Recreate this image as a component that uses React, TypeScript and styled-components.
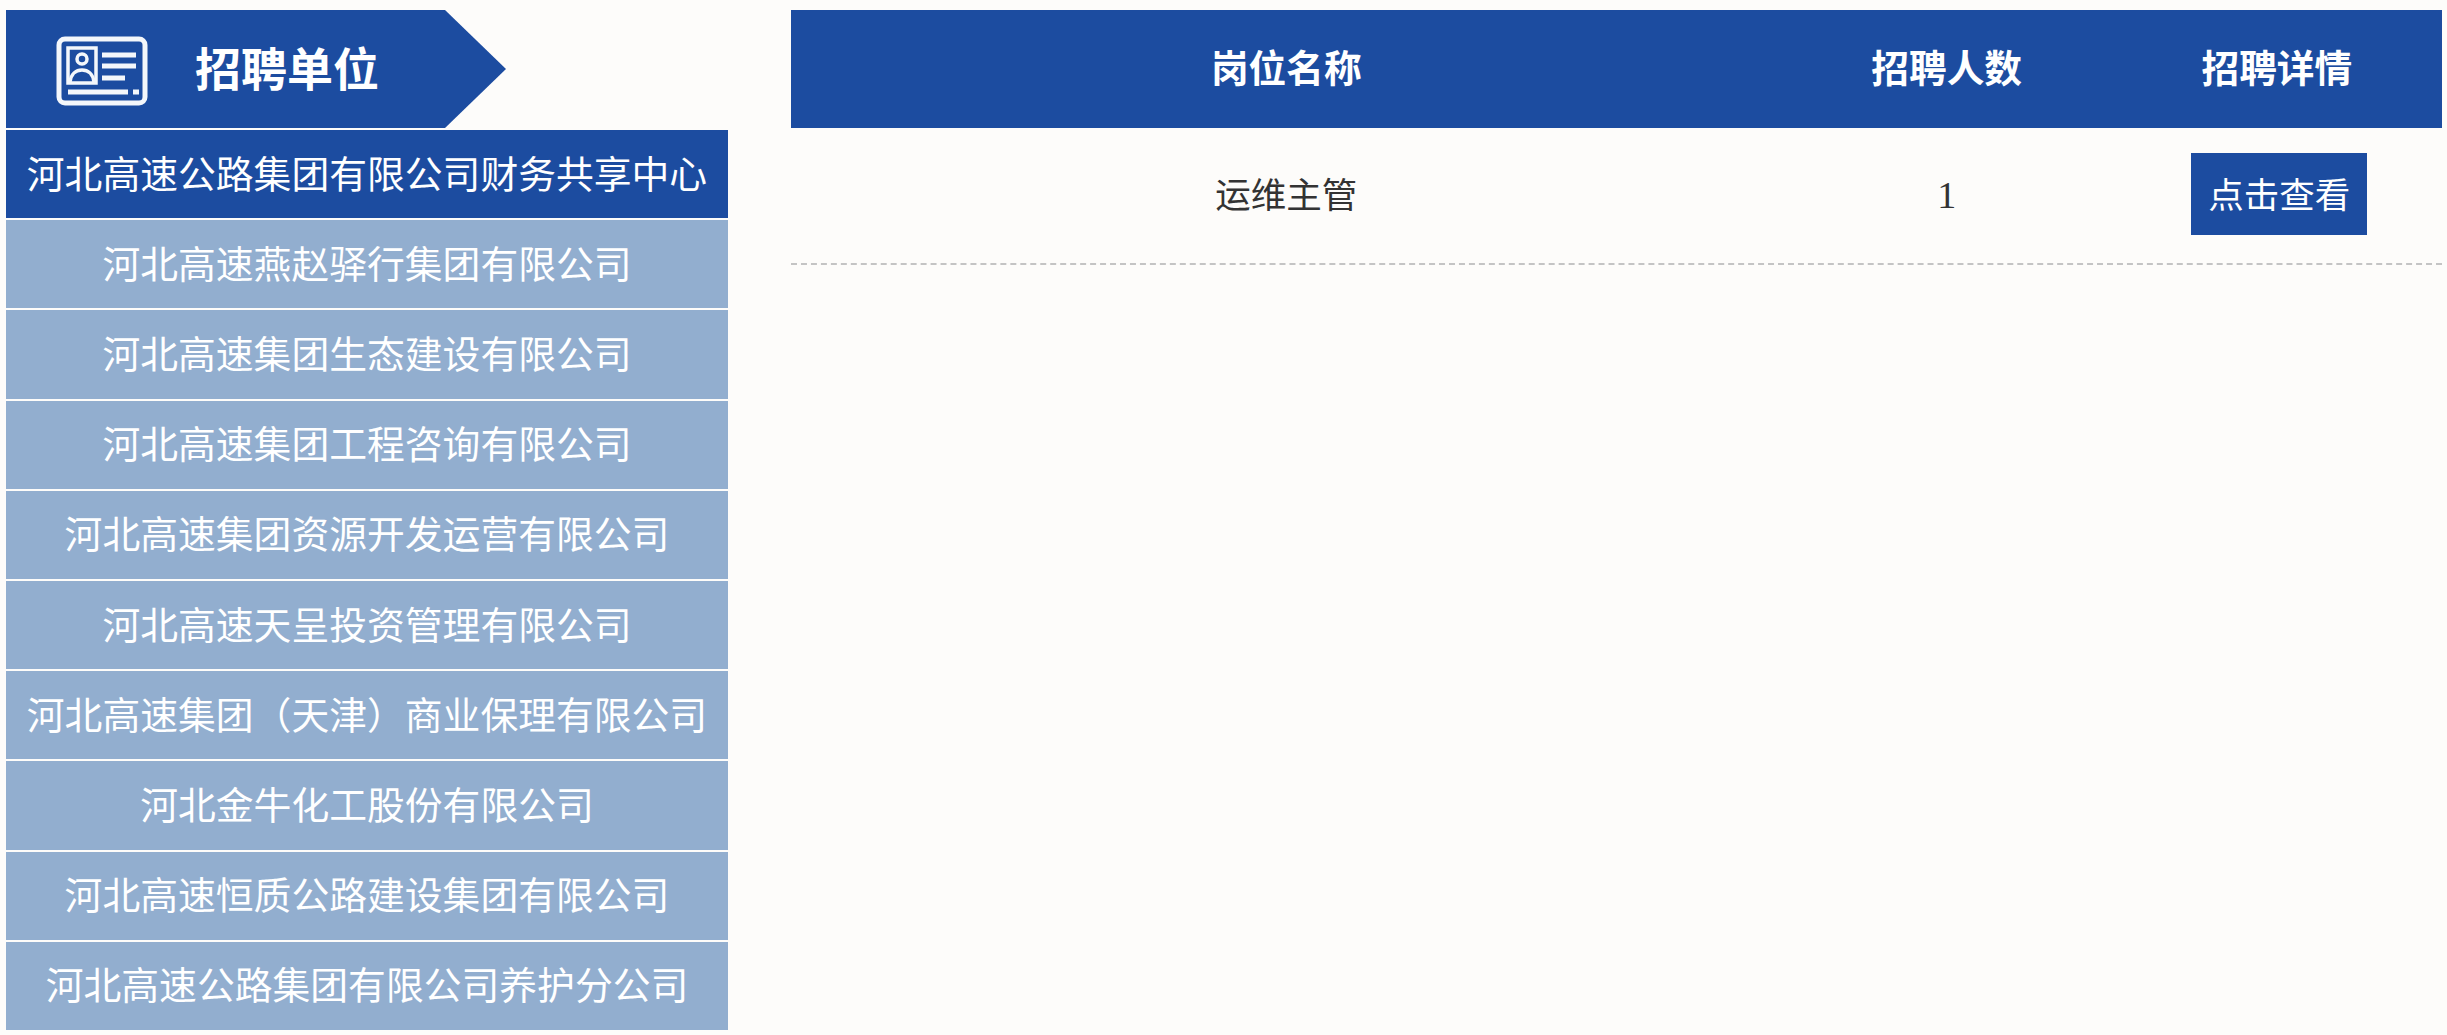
import React from 'react';
import styled, { createGlobalStyle } from 'styled-components';

const GlobalStyle = createGlobalStyle`
  html, body {
    margin: 0;
    padding: 0;
    background: #fdfcfa;
  }
  body {
    font-family: "Liberation Serif", "Noto Sans CJK SC", serif;
  }
`;

const Page = styled.div`
  display: grid;
  grid-template-columns: 722px 1fr;
  column-gap: 63px;
  height: 1035px;
  box-sizing: border-box;
  padding: 10px 5px 0 6px;
  overflow: hidden;
`;

const Sidebar = styled.aside`
  display: flex;
  flex-direction: column;
`;

const SideHeader = styled.div`
  display: flex;
  align-items: center;
  width: 501px;
  height: 118px;
  box-sizing: border-box;
  padding: 0 0 7px 50px;
  background: #1c4ca0;
  color: #fff;
  clip-path: polygon(0 0, 439px 0, 500px 59px, 439px 118px, 0 118px);
`;

const SideTitle = styled.h2`
  margin: 0 0 0 47px;
  font-family: "Noto Sans CJK SC", sans-serif;
  font-size: 46px;
  font-weight: 700;
  line-height: 1;
`;

const CompanyList = styled.ul`
  display: flex;
  flex-direction: column;
  gap: 2px;
  margin: 2px 0 0;
  padding: 0;
  list-style: none;
`;

const CompanyItem = styled.li<{ $active?: boolean }>`
  height: 88.2px;
  box-sizing: border-box;
  padding-bottom: 6px;
  display: flex;
  align-items: center;
  justify-content: center;
  background: ${(p) => (p.$active ? '#1c4ca0' : '#92aecf')};
  color: #fff;
  font-size: 37.8px;
  white-space: nowrap;
`;

const JobTable = styled.section`
  display: flex;
  flex-direction: column;
`;

const TableRow = styled.div`
  display: grid;
  grid-template-columns: 60% 20% 20%;
  align-items: center;
  justify-items: center;
`;

const HeadRow = styled(TableRow)`
  height: 118px;
  padding-bottom: 7px;
  box-sizing: border-box;
  background: #1c4ca0;
  color: #fff;
  font-family: "Noto Sans CJK SC", sans-serif;
  font-size: 37.7px;
  font-weight: 700;
`;

const BodyRow = styled(TableRow)`
  height: 137px;
  padding-bottom: 3px;
  box-sizing: border-box;
  border-bottom: 2px dashed #c4c4c4;
  color: #333;
  font-size: 35.5px;
`;

const BodyCell = styled.span`
  padding-bottom: 3px;
`;

const CountCell = styled.span`
  padding-top: 2px;
  font-size: 38px;
  line-height: 1;
`;

const DetailButton = styled.button`
  width: 176px;
  height: 82px;
  margin-left: 5px;
  padding: 0 0 3px;
  border: 0;
  background: #1c4ca0;
  color: #fff;
  font: inherit;
`;

const IconSvg = styled.svg`
  flex: none;
  margin-top: 10px;
`;

const CardIcon = () => (
  <IconSvg width="92" height="70" viewBox="0 0 92 70" fill="none" stroke="#f4f7fb" aria-hidden="true">
    <rect x="3" y="3" width="86" height="64" rx="6" strokeWidth="5" />
    <rect x="12" y="12" width="28" height="35" strokeWidth="3.500" />
    <circle cx="26" cy="23" r="5" strokeWidth="3.500" />
    <path d="M14 46c1-8 6-12 12-12s11 4 12 12" strokeWidth="3.500" />
    <path d="M46 19h34M46 30h34M46 42h23M12 56h60M77 56h6" strokeWidth="5" />
  </IconSvg>
);

const companies = [
  '河北高速公路集团有限公司财务共享中心',
  '河北高速燕赵驿行集团有限公司',
  '河北高速集团生态建设有限公司',
  '河北高速集团工程咨询有限公司',
  '河北高速集团资源开发运营有限公司',
  '河北高速天呈投资管理有限公司',
  '河北高速集团（天津）商业保理有限公司',
  '河北金牛化工股份有限公司',
  '河北高速恒质公路建设集团有限公司',
  '河北高速公路集团有限公司养护分公司',
];

const App: React.FC = () => (
  <>
    <GlobalStyle />
    <Page>
      <Sidebar>
        <SideHeader>
          <CardIcon />
          <SideTitle>招聘单位</SideTitle>
        </SideHeader>
        <CompanyList>
          {companies.map((name, i) => (
            <CompanyItem key={name} $active={i === 0}>
              {name}
            </CompanyItem>
          ))}
        </CompanyList>
      </Sidebar>
      <JobTable>
        <HeadRow>
          <span>岗位名称</span>
          <span>招聘人数</span>
          <span>招聘详情</span>
        </HeadRow>
        <BodyRow>
          <BodyCell>运维主管</BodyCell>
          <CountCell>1</CountCell>
          <DetailButton>点击查看</DetailButton>
        </BodyRow>
      </JobTable>
    </Page>
  </>
);

export default App;
